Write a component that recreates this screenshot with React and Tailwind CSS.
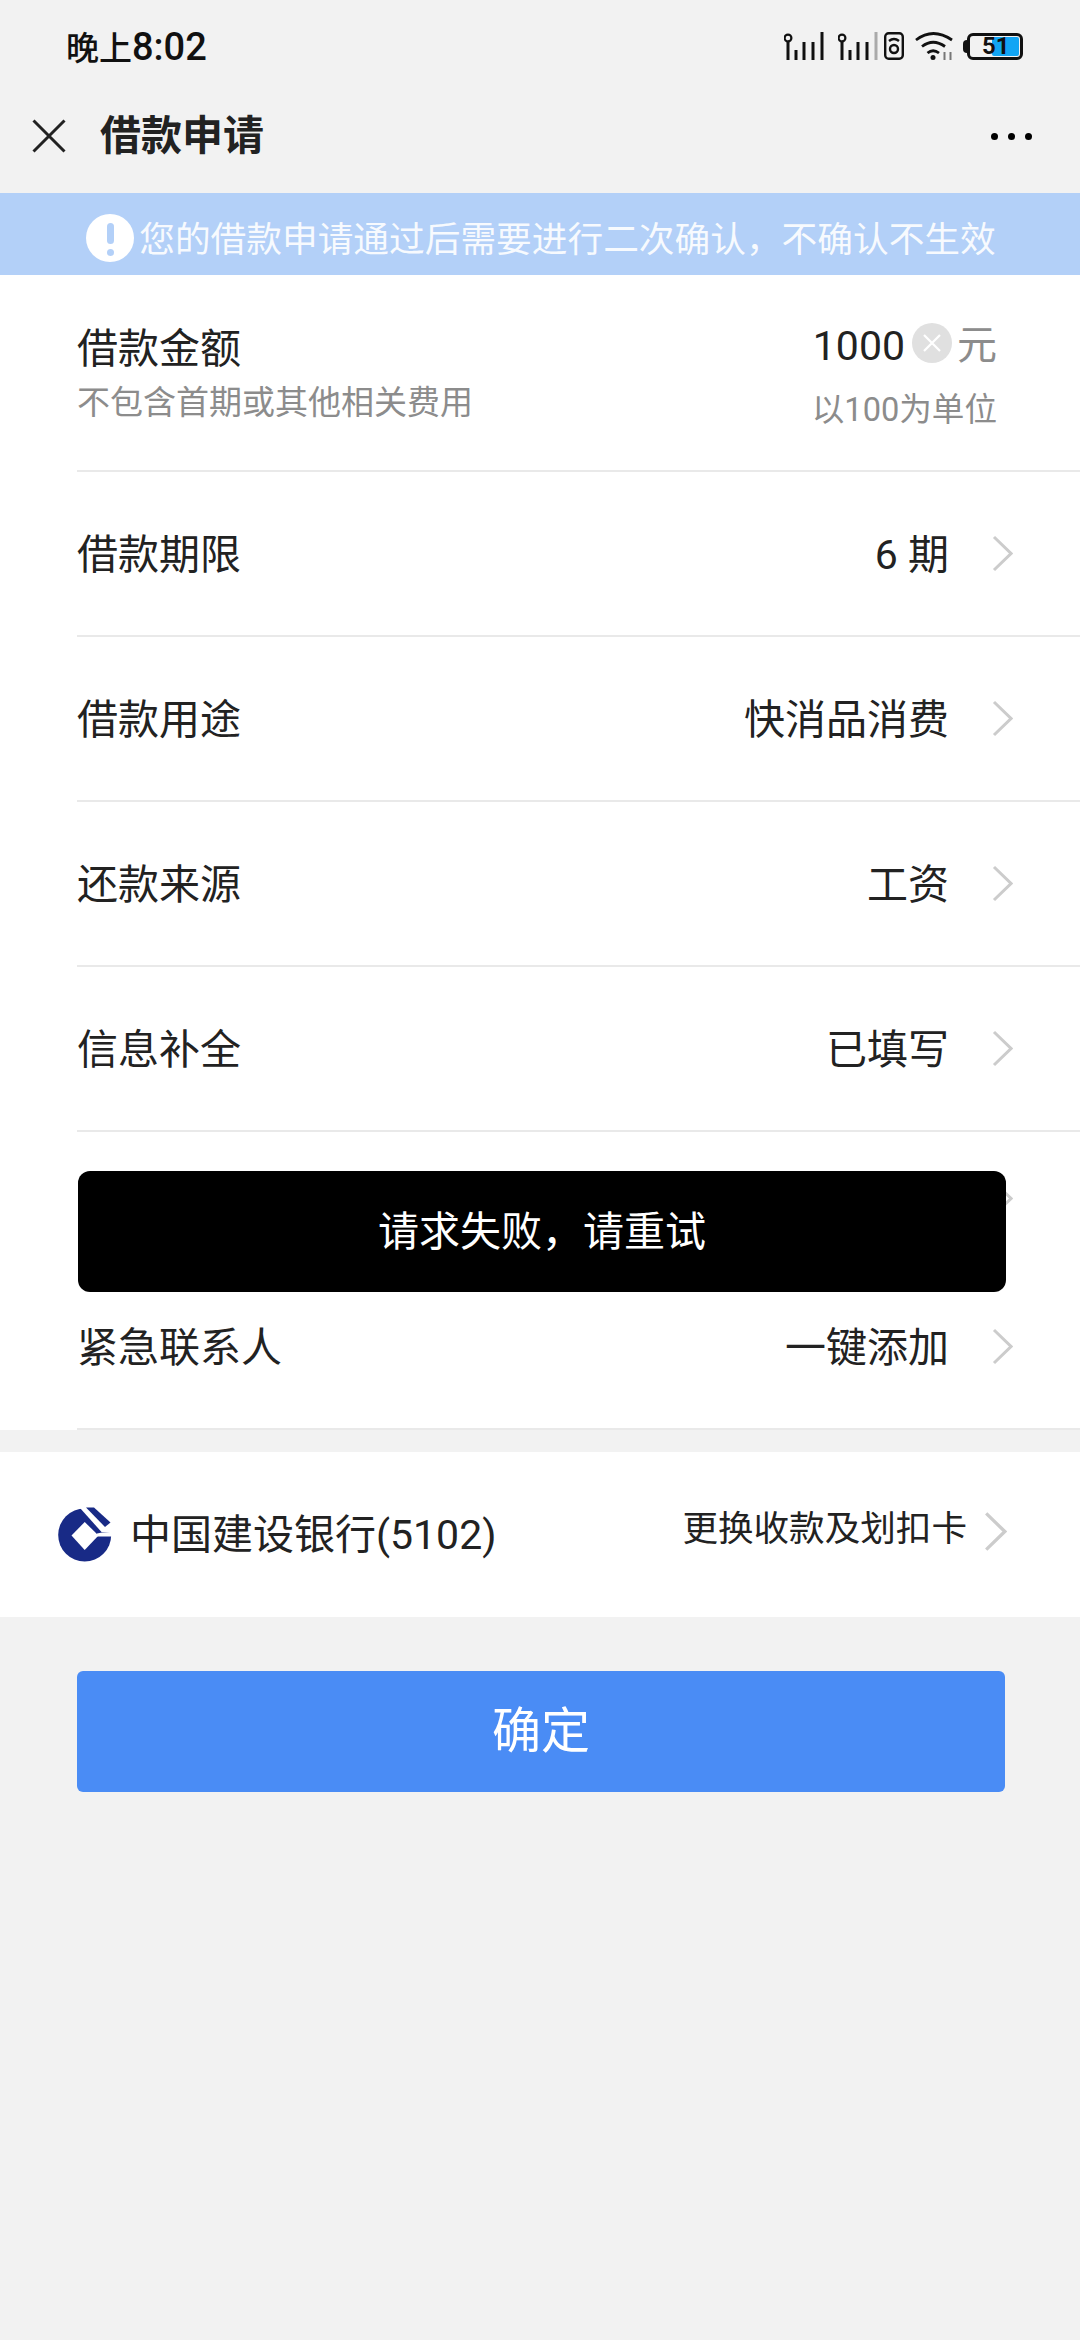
const Chevron = ({ w = 21, h = 37 }) => (
  <svg width={w} height={h} viewBox="0 0 21 37" fill="none" className="shrink-0">
    <path d="M2 2 L19 18.5 L2 35" stroke="#cccccc" strokeWidth="3" />
  </svg>
);

const Signal = ({ dim }) => (
  <svg width="40" height="28" viewBox="0 0 40 28" fill="none" className="shrink-0">
    <circle cx="4" cy="6" r="3.4" stroke="#111" strokeWidth="2.2" />
    <path d="M4 9 V28" stroke="#111" strokeWidth="3" />
    <path d="M12 18 V28" stroke="#111" strokeWidth="3" />
    <path d="M20 10 V28" stroke="#111" strokeWidth="3" />
    <path d="M29 10 V28" stroke="#111" strokeWidth="3" />
    <path d="M38 0 V28" stroke={dim ? "#aaaaaa" : "#111"} strokeWidth="3" />
  </svg>
);

const StatusIcons = () => (
  <div className="flex items-center mb-[4px]">
    <Signal />
    <div className="ml-[14px]">
      <Signal dim />
    </div>
    <svg width="20" height="28" viewBox="0 0 20 28" fill="none" className="ml-[6px] shrink-0">
      <rect x="1.2" y="1.2" width="17.6" height="25.6" rx="3.5" stroke="#111" strokeWidth="2.4" />
      <circle cx="10" cy="17" r="4" stroke="#111" strokeWidth="2.4" />
      <path d="M5 9 Q10 5 15 9" stroke="#111" strokeWidth="2.4" />
    </svg>
    <svg width="38" height="28" viewBox="0 0 38 28" fill="none" className="ml-[11px] shrink-0">
      <path d="M1 8 Q18 -5 37 8" stroke="#111" strokeWidth="2.8" />
      <path d="M7 14.5 Q18 6 30 14.5" stroke="#111" strokeWidth="2.8" />
      <path d="M12.5 21 Q18 16.5 24 21" stroke="#111" strokeWidth="2.8" />
      <circle cx="18" cy="25.5" r="2.5" fill="#111" />
      <path d="M29.5 20 V28 M35.5 20 V28" stroke="#777" strokeWidth="2" />
    </svg>
    <div className="ml-[10px] flex items-center shrink-0">
      <div className="w-[4px] h-[13px] bg-[#111] rounded-l-sm" />
      <div className="relative w-[56px] h-[27px] border-[3px] border-[#111] rounded-[6px] overflow-hidden">
        <div className="absolute left-[22px] top-[1px] bottom-[1px] right-[1px] bg-[#12a5f4] rounded-[2px]" />
        <span className="absolute left-[12px] top-[-2px] text-[24px] leading-[25px] font-bold text-[#111]">51</span>
      </div>
    </div>
  </div>
);

const Row = ({ label, value, height, last }) => (
  <div className={`flex items-center ml-[77px] pr-[67px] ${last ? "" : "border-b-2 border-[#e9e9e9]"} ${height}`}>
    <span className="pt-[3px] text-[#222222]">{label}</span>
    <span className="pt-[3px] ml-auto text-[#222222]">{value}</span>
    <div className="ml-[43px]">
      <Chevron />
    </div>
  </div>
);

export default function App() {
  return (
    <div className="relative w-[1080px] h-[2340px] bg-[#f2f2f2] overflow-hidden text-[41px] leading-[48px] font-['Roboto','Noto_Sans_CJK_SC',sans-serif]">
      {/* Status bar */}
      <div className="flex items-center justify-between h-[96px] pl-[66px] pr-[57px]">
        <span className="text-[33px] font-medium text-[#111111]">
          晚上<span className="text-[38px]">8:02</span>
        </span>
        <StatusIcons />
      </div>

      {/* Nav bar */}
      <div className="flex items-center h-[97px] pb-[17px] pl-[32px] pr-[48px]">
        <svg width="34" height="34" viewBox="0 0 34 34" fill="none">
          <path d="M1.5 1.5 L32.5 32.5 M32.5 1.5 L1.5 32.5" stroke="#222" strokeWidth="3" />
        </svg>
        <span className="ml-[34px] text-[41px] font-bold text-[#222222]">借款申请</span>
        <div className="ml-auto flex gap-[10px]">
          <div className="w-[7px] h-[7px] rounded-full bg-black" />
          <div className="w-[7px] h-[7px] rounded-full bg-black" />
          <div className="w-[7px] h-[7px] rounded-full bg-black" />
        </div>
      </div>

      {/* Notice */}
      <div className="flex items-center justify-center gap-[5px] h-[82px] pt-[8px] pl-[2px] bg-[#b3d0f8]">
        <div className="relative w-[48px] h-[48px] rounded-full bg-white flex flex-col items-center">
          <div className="mt-[9px] w-[7px] h-[21px] rounded-full bg-[#b3d0f8]" />
          <div className="mt-[5px] w-[7px] h-[7px] rounded-full bg-[#b3d0f8]" />
        </div>
        <span className="pt-[4px] text-[35.7px] whitespace-nowrap text-white opacity-90">您的借款申请通过后需要进行二次确认，不确认不生效</span>
      </div>

      {/* Form */}
      <div className="bg-white">
        <div className="flex justify-between ml-[77px] pr-[83px] h-[197px] border-b-2 border-[#e9e9e9]">
          <div className="pt-[50px]">
            <div className="text-[#222222]">借款金额</div>
            <div className="mt-[10px] text-[33px] leading-[40px] text-[#8c8c8c]">不包含首期或其他相关费用</div>
          </div>
          <div className="pt-[47px] flex flex-col items-end">
            <div className="flex items-center">
              <span className="text-[41px] text-[#222222]">1000</span>
              <div className="ml-[7px] -mt-[6px] w-[40px] h-[40px] rounded-full bg-[#e0e0e0] flex items-center justify-center">
                <svg width="20" height="20" viewBox="0 0 20 20" fill="none">
                  <path d="M2 2 L18 18 M18 2 L2 18" stroke="#fff" strokeWidth="2.2" />
                </svg>
              </div>
              <span className="ml-[5px] text-[40px] text-[#8c8c8c]">元</span>
            </div>
            <div className="mt-[20px] text-[32.6px] leading-[40px] text-[#8c8c8c]">以100为单位</div>
          </div>
        </div>
        <Row label="借款期限" value="6 期" height="h-[165px]" />
        <Row label="借款用途" value="快消品消费" height="h-[165px]" />
        <Row label="还款来源" value="工资" height="h-[165px]" />
        <Row label="信息补全" value="已填写" height="h-[165px]" />
        <Row label="" value="" height="h-[133px]" last />
        <Row label="紧急联系人" value="一键添加" height="h-[165px]" />
      </div>

      {/* Bank card */}
      <div className="flex items-center mt-[22px] h-[165px] bg-white pl-[58px] pr-[73px]">
        <svg width="54" height="55" viewBox="19 17 54 55" className="shrink-0">
          <circle cx="45.7" cy="45" r="26.5" fill="#182a86" />
          <path d="M41 18 L62.5 42 L80 44 L80 10 L41 10 Z" fill="#ffffff" />
          <path d="M47 17.5 L55 17.5 L71.5 32.5 L66 37 Z" fill="#182a86" />
          <path d="M45.7 32 L59.5 45.5 L45.7 60 L32.5 45.5 Z" fill="#ffffff" />
          <path d="M58 43.5 L63 42.5 L80 42.5 L80 46.5 L58 46.5 Z" fill="#ffffff" />
        </svg>
        <span className="ml-[18px] text-[#222222] text-[41px]">中国建设银行(5102)</span>
        <span className="ml-auto text-[35.6px] text-[#222222] relative top-[-6px]">更换收款及划扣卡</span>
        <div className="ml-[17px] relative top-[-3px]">
          <Chevron w={23} h={41} />
        </div>
      </div>

      {/* Confirm */}
      <div className="ml-[77px] mr-[75px] mt-[54px] h-[121px] bg-[#4a8cf5] rounded-[6px] flex items-center justify-center text-[49px] text-white">
        确定
      </div>

      {/* Toast */}
      <div className="absolute left-[78px] top-[1171px] w-[928px] h-[121px] bg-black rounded-[12px] flex items-center justify-center text-[41px] text-white">
        请求失败，请重试
      </div>
    </div>
  );
}
